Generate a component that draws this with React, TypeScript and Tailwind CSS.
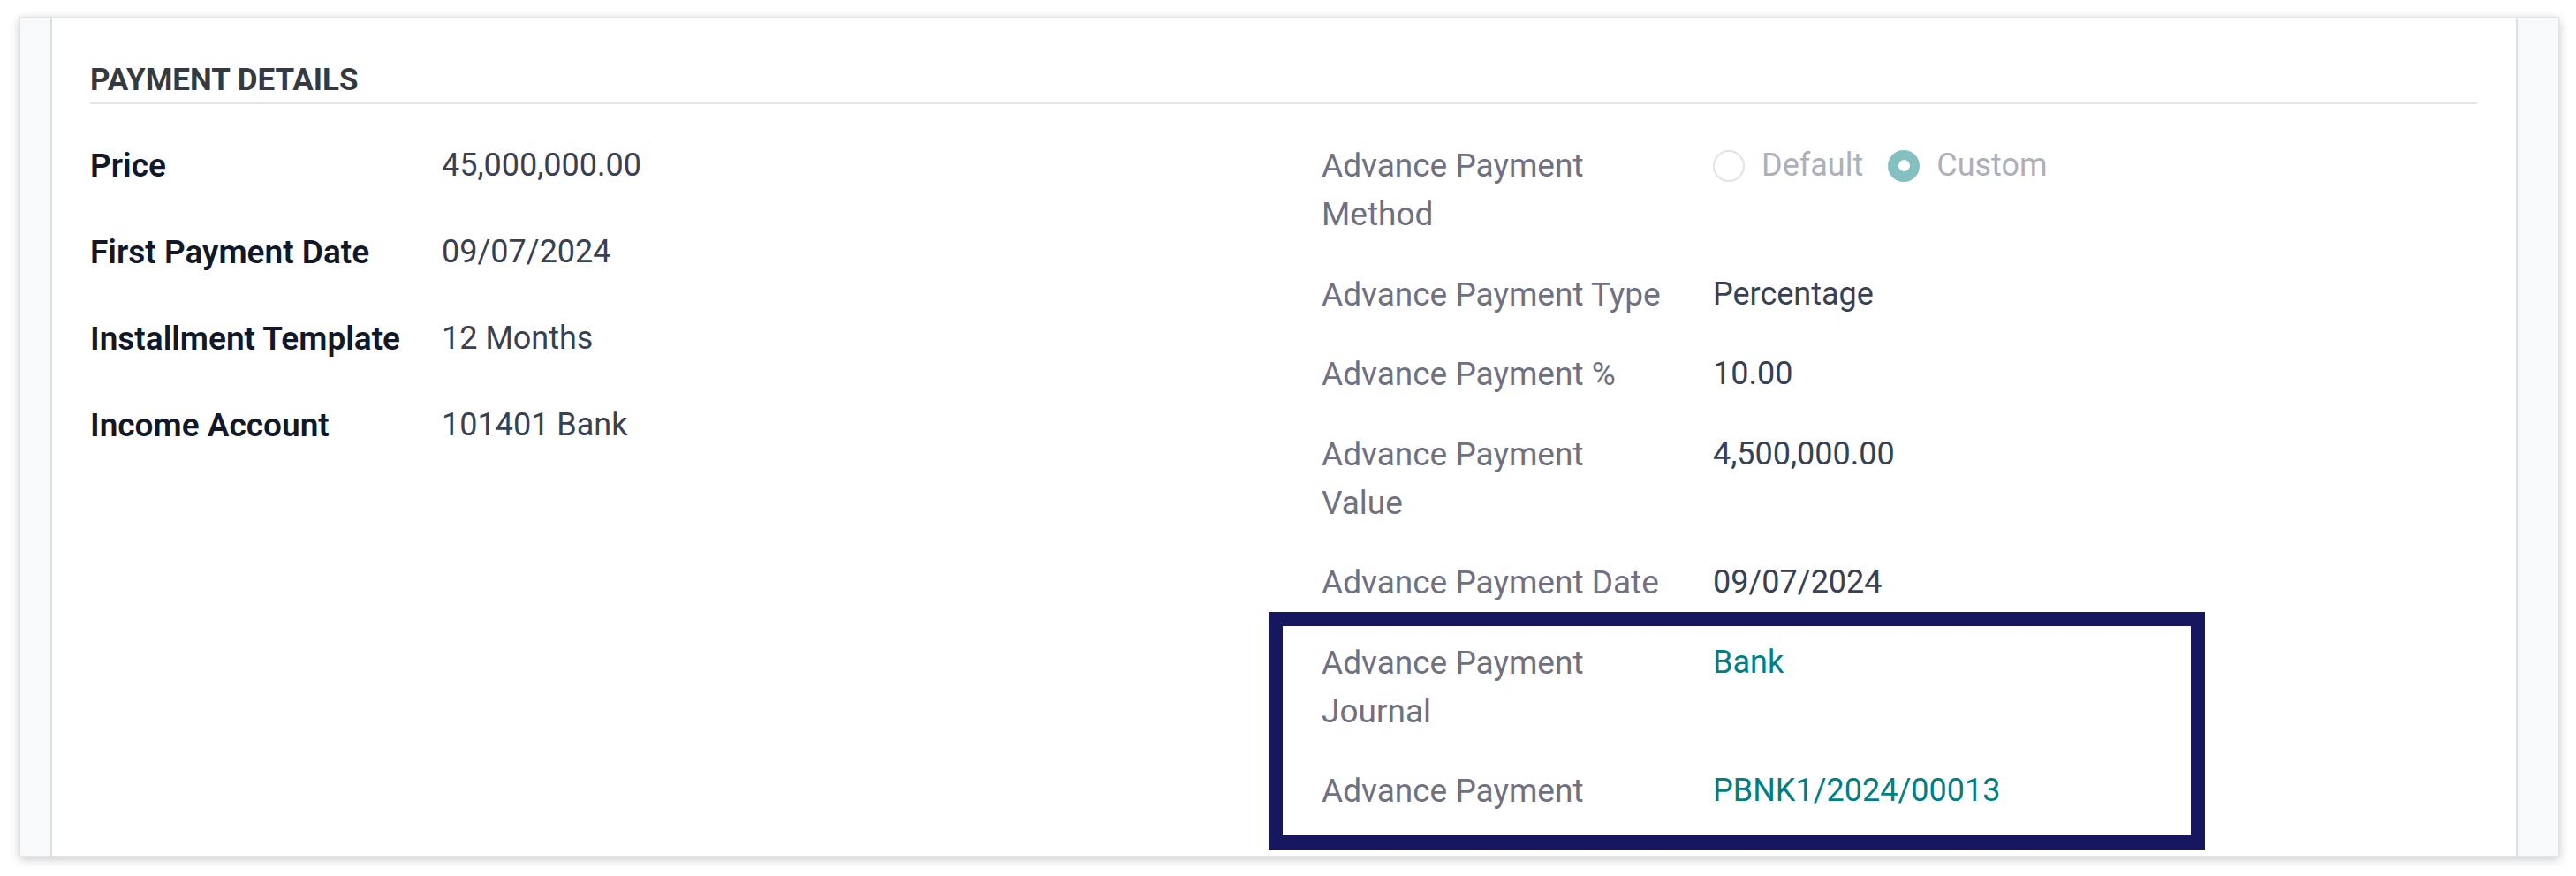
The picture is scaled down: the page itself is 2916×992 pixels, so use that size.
import React from 'react';

type Field = {
  label: string;
  value: React.ReactNode;
};

const leftFields: Field[] = [
  { label: 'Price', value: '45,000,000.00' },
  { label: 'First Payment Date', value: '09/07/2024' },
  { label: 'Installment Template', value: '12 Months' },
  { label: 'Income Account', value: '101401 Bank' },
];

const Radio = ({ checked, label }: { checked?: boolean; label: string }) => (
  <span className="inline-flex items-center gap-[19px]">
    {checked ? (
      <span className="flex h-[36px] w-[36px] items-center justify-center rounded-full bg-[#84c0c0]">
        <span className="h-[13px] w-[13px] rounded-full bg-white" />
      </span>
    ) : (
      <span className="h-[36px] w-[36px] rounded-full border-2 border-[#e1e3e6] bg-white" />
    )}
    <span className="text-[#adb0bb]">{label}</span>
  </span>
);

const rightFields: Field[] = [
  {
    label: 'Advance Payment Method',
    value: (
      <span className="flex items-center gap-[28px]">
        <Radio label="Default" />
        <Radio checked label="Custom" />
      </span>
    ),
  },
  { label: 'Advance Payment Type', value: 'Percentage' },
  { label: 'Advance Payment %', value: '10.00' },
  { label: 'Advance Payment Value', value: '4,500,000.00' },
  { label: 'Advance Payment Date', value: '09/07/2024' },
  { label: 'Advance Payment Journal', value: <a className="text-[#017e84]">Bank</a> },
  { label: 'Advance Payment', value: <a className="text-[#017e84]">PBNK1/2024/00013</a> },
];

export default function App() {
  return (
    <div className="min-h-screen bg-white pl-[22px] pt-[19px] font-['Roboto',sans-serif]">
      <div className="relative flex h-[951px] w-[2875px] overflow-hidden border border-[#e3e3e3] bg-white shadow-[0_3px_10px_rgba(0,0,0,0.22)]">
        <div className="w-[36px] shrink-0 border-r-2 border-[#dcdde1] bg-[#f8f9fb]" />

        <div className="flex-1 pl-[43px] pr-[44px] pt-[51px]">
          <h2 className="border-b-2 border-[#e4e4e4] pb-[5px] text-[35px] font-bold uppercase leading-[40px] text-[#343a40]">
            Payment Details
          </h2>

          <div className="mt-[42px] grid grid-cols-2 leading-[55px]">
            {/* left group */}
            <div className="flex flex-col gap-y-[43px]">
              {leftFields.map((f) => (
                <div key={f.label} className="flex">
                  <div className="w-[398px] shrink-0 text-[37px] font-semibold text-[#111827]">{f.label}</div>
                  <div className="text-[36px] text-[#374151]">{f.value}</div>
                </div>
              ))}
            </div>

            {/* right group */}
            <div className="flex flex-col gap-y-[35.5px] pl-[43px]">
              {rightFields.map((f) => (
                <div key={f.label} className="flex">
                  <div className="w-[443px] shrink-0 pr-[50px] text-[37px] text-[#6f7080]">{f.label}</div>
                  <div className="text-[36px] text-[#374151]">{f.value}</div>
                </div>
              ))}
            </div>
          </div>
        </div>

        <div className="w-[48px] shrink-0 border-l-2 border-[#dcdde1] bg-[#f8f9fb]" />

        {/* highlight annotation */}
        <div className="pointer-events-none absolute left-[1413px] top-[673px] h-[269px] w-[1060px] border-[16px] border-[#171760]" />
      </div>
    </div>
  );
}
